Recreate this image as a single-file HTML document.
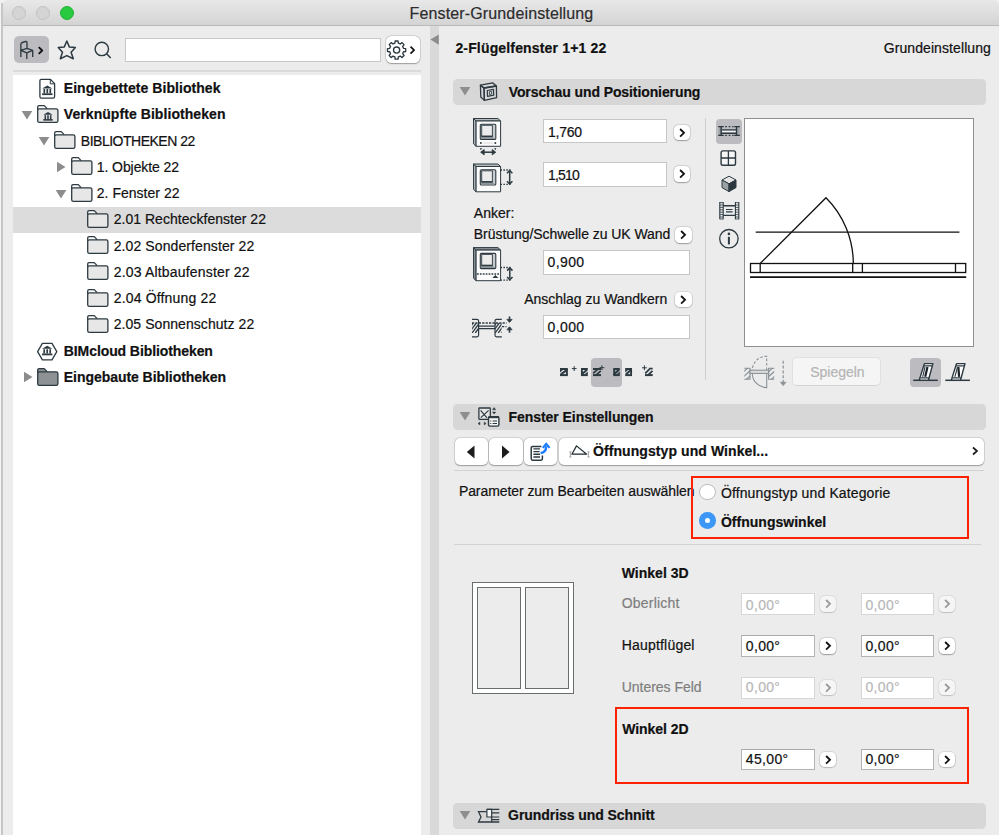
<!DOCTYPE html>
<html lang="de"><head><meta charset="utf-8"><title>Fenster-Grundeinstellung</title>
<style>

*{box-sizing:border-box;margin:0;padding:0}
html,body{width:999px;height:835px;overflow:hidden;background:#ececec}
body{position:relative;font-family:"Liberation Sans",sans-serif;font-size:14px;color:#111}
.a{position:absolute}
.t{position:absolute;white-space:nowrap;line-height:20px;height:20px;-webkit-text-stroke:0.2px currentColor}
#title{left:2.5px;top:0;width:996.5px;height:25.5px;background:linear-gradient(#e9e8e9,#d5d4d5);border-bottom:1px solid #b9b9b9;border-top-left-radius:5px;border-top-right-radius:5px}
.tl{position:absolute;top:6px;width:14px;height:14px;border-radius:50%;background:#d4d4d4;border:1px solid #c2c2c2}
#tree{left:13px;top:75px;width:408px;height:760px;background:#fff}
.sel{left:13px;top:206.5px;width:408px;height:26px;background:#dcdcdc}
.inp{position:absolute;background:#fff;border:1px solid #c6c6c6}
.inp.dis{border-color:#d6d6d6}
.inp.en{border-color:#b4b4b4;border-top-color:#aaa}
.ab{position:absolute;width:16.2px;height:15.6px;background:#fff;border-radius:4.5px;box-shadow:0 0 0 0.6px rgba(0,0,0,.13),0 0.6px 1.2px rgba(0,0,0,.3)}
.ab.dis{background:#f5f5f5;box-shadow:0 0 0 0.6px rgba(0,0,0,.09),0 0.5px 1px rgba(0,0,0,.15)}
.hdr{position:absolute;left:453px;width:533px;height:25.8px;background:#d7d7d7;border-radius:4.5px}
.btn{position:absolute;background:#fff;border-radius:5px;box-shadow:0 0 0 0.6px rgba(0,0,0,.13),0 0.6px 1.3px rgba(0,0,0,.3)}
.hl{position:absolute;height:1px;background:#d2d2d2}
.red{position:absolute;border:2.5px solid #ff2200;z-index:5}

</style></head><body>
<div class="a" style="left:0;top:0;width:999px;height:8px;background:#f1f1f1"></div><div class="a" id="title"></div>
<div class="a" style="left:0;top:3px;width:2.5px;height:832px;background:linear-gradient(90deg,#f4f4f4 0,#f4f4f4 36%,#c6c6c6 40%,#c6c6c6 100%)"></div>
<div class="tl" style="left:12px"></div><div class="tl" style="left:36px"></div><div class="tl" style="left:60px;background:#29c940;border-color:#20b237"></div>
<div class="a" style="left:14px;top:36px;width:35px;height:27px;border-radius:5px;background:#bcbcc0"></div>
<div class="inp" style="left:125px;top:37.5px;width:255.6px;height:24.8px;border-color:#c8c8c8"></div>
<div class="btn" style="left:385.5px;top:36.2px;width:34.9px;height:26.9px;border-radius:5.5px"></div>
<div class="hl" style="left:13px;top:69.8px;width:408px;background:#dadada;height:2px"></div>
<div class="a" id="tree"></div><div class="a sel"></div>
<div class="a" style="left:430.3px;top:26px;width:8.5px;height:809px;background:#d9d9d9"></div>
<svg class="a" style="left:430px;top:33px" width="9" height="13" viewBox="430 33 9 13"><path d="M438.8 34.4 V44.8 L430.4 39.6 Z" fill="#8c8c8c"/></svg>
<svg class="a" style="left:21.3px;top:109.8px" width="12" height="10" viewBox="0 0 12 10"><path d="M0.7 1 H11.3 L6 9.5 Z" fill="#8c8c8c"/></svg>
<svg class="a" style="left:38.0px;top:136.0px" width="12" height="10" viewBox="0 0 12 10"><path d="M0.7 1 H11.3 L6 9.5 Z" fill="#8c8c8c"/></svg>
<svg class="a" style="left:56.0px;top:161.2px" width="10" height="12" viewBox="0 0 10 12"><path d="M1 0.7 V11.3 L9.5 6 Z" fill="#8c8c8c"/></svg>
<svg class="a" style="left:55.0px;top:188.5px" width="12" height="10" viewBox="0 0 12 10"><path d="M0.7 1 H11.3 L6 9.5 Z" fill="#8c8c8c"/></svg>
<svg class="a" style="left:22.5px;top:371.2px" width="10" height="12" viewBox="0 0 10 12"><path d="M1 0.7 V11.3 L9.5 6 Z" fill="#8c8c8c"/></svg>
<div class="hdr" style="top:79px"></div>
<svg class="a" style="left:458.9px;top:86.4px" width="12" height="10" viewBox="0 0 12 10"><path d="M0.7 1 H11.3 L6 9.5 Z" fill="#8e8e8e"/></svg>
<div class="hdr" style="top:404px"></div>
<svg class="a" style="left:458.9px;top:411.4px" width="12" height="10" viewBox="0 0 12 10"><path d="M0.7 1 H11.3 L6 9.5 Z" fill="#8e8e8e"/></svg>
<div class="hdr" style="top:803px"></div>
<svg class="a" style="left:458.9px;top:810.4px" width="12" height="10" viewBox="0 0 12 10"><path d="M0.7 1 H11.3 L6 9.5 Z" fill="#8e8e8e"/></svg>
<div class="inp " style="left:543.0px;top:118.7px;width:123.6px;height:24.8px"></div>
<div class="ab" style="left:674.3px;top:124.5px"><svg class="a" style="left:0;top:0" width="16" height="16" viewBox="0 0 16 16"><path d="M6.1 4 L10 7.8 L6.1 11.6" fill="none" stroke="#111" stroke-width="1.8"/></svg></div>
<div class="inp " style="left:543.0px;top:161.7px;width:123.6px;height:25.0px"></div>
<div class="ab" style="left:674.3px;top:166.3px"><svg class="a" style="left:0;top:0" width="16" height="16" viewBox="0 0 16 16"><path d="M6.1 4 L10 7.8 L6.1 11.6" fill="none" stroke="#111" stroke-width="1.8"/></svg></div>
<div class="ab" style="left:675.4px;top:227.3px"><svg class="a" style="left:0;top:0" width="16" height="16" viewBox="0 0 16 16"><path d="M6.1 4 L10 7.8 L6.1 11.6" fill="none" stroke="#111" stroke-width="1.8"/></svg></div>
<div class="inp " style="left:543.0px;top:250.3px;width:147.0px;height:24.7px"></div>
<div class="ab" style="left:675.4px;top:291.5px"><svg class="a" style="left:0;top:0" width="16" height="16" viewBox="0 0 16 16"><path d="M6.1 4 L10 7.8 L6.1 11.6" fill="none" stroke="#111" stroke-width="1.8"/></svg></div>
<div class="inp " style="left:543.0px;top:314.6px;width:147.0px;height:24.9px"></div>
<div class="a" style="left:705px;top:118px;width:1px;height:262px;background:#d0d0d0"></div>
<div class="a" style="left:591px;top:358px;width:31px;height:29px;border-radius:4px;background:#bcbcc0"></div>
<div class="a" style="left:716px;top:118.5px;width:26px;height:25.5px;border-radius:4px;background:#bcbcc0"></div>
<div class="a" style="left:744.2px;top:117.5px;width:229.8px;height:229.8px;background:#fff;border:1.5px solid #8f8f8f"></div>
<svg class="a" style="left:745px;top:118px" width="229" height="229" viewBox="745 118 229 229" fill="none" stroke="#111" stroke-width="1.3">
<path d="M755.7 232.2 H959.4"/><path d="M760.2 263.5 L826 197.7 A93.1 93.1 0 0 1 853.3 263.5"/>
<rect x="750.5" y="263.5" width="215.2" height="9"/><path d="M760.2 263.5 v9 M852.7 263.5 v9 M862.4 263.5 v9 M955.5 263.5 v9"/>
<path d="M750 277.2 H966.2" stroke-width="1.8"/></svg>
<div class="a" style="left:792.3px;top:357.3px;width:89.2px;height:29px;border-radius:5px;background:#f5f5f5;border:1px solid #e0e0e0;border-bottom-color:#d4d4d4"></div>
<div class="a" style="left:909.5px;top:358px;width:31.5px;height:28.5px;border-radius:4px;background:#bcbcc0"></div>
<div class="btn" style="left:454.5px;top:437.5px;width:33.0px;height:27px"></div>
<div class="btn" style="left:489px;top:437.5px;width:33.5px;height:27px"></div>
<div class="btn" style="left:524px;top:437.5px;width:33px;height:27px"></div>
<div class="btn" style="left:558.5px;top:437.5px;width:425.5px;height:27px"></div>
<svg class="a" style="left:463px;top:444px" width="16" height="16" viewBox="463 444 16 16"><path d="M474.5 445.6 V458.5 L466.8 452 Z" fill="#1c1c1c"/></svg>
<svg class="a" style="left:498px;top:444px" width="16" height="16" viewBox="498 444 16 16"><path d="M502 445.6 V458.5 L509.5 452 Z" fill="#1c1c1c"/></svg>
<svg class="a" style="left:969px;top:445px" width="12" height="12" viewBox="0 0 12 12"><path d="M4 2.5 L8 6 L4 9.5" fill="none" stroke="#1c1c1c" stroke-width="1.7"/></svg>
<div class="hl" style="left:454px;top:469.7px;width:530px;height:1.5px"></div>
<div class="hl" style="left:454px;top:543.7px;width:527px;height:1.5px"></div>
<div class="red" style="left:690.7px;top:475.5px;width:278.1px;height:63.3px"></div>
<div class="a" style="left:699px;top:483.7px;width:16.5px;height:16.5px;border-radius:50%;background:#fff;border:1px solid #bdbdbd"></div>
<div class="a" style="left:699px;top:512.4px;width:16.5px;height:16.5px;border-radius:50%;background:#3d97f7"></div><div class="a" style="left:704.5px;top:517.9px;width:5.5px;height:5.5px;border-radius:50%;background:#fff"></div>
<div class="a" style="left:472px;top:582px;width:102px;height:112px;background:#fff;border:1px solid #6a6e6e"></div>
<div class="a" style="left:477px;top:587px;width:44px;height:102px;background:#ececec;border:1px solid #6a6e6e"></div>
<div class="a" style="left:525px;top:587px;width:44px;height:102px;background:#ececec;border:1px solid #6a6e6e"></div>
<div class="inp dis" style="left:741.3px;top:593.0px;width:73.4px;height:22.0px"></div>
<div class="ab dis" style="left:819.5px;top:596.2px"><svg class="a" style="left:0;top:0" width="16" height="16" viewBox="0 0 16 16"><path d="M6.1 4 L10 7.8 L6.1 11.6" fill="none" stroke="#9a9a9a" stroke-width="1.8"/></svg></div>
<div class="inp dis" style="left:861.0px;top:593.0px;width:73.3px;height:22.0px"></div>
<div class="ab dis" style="left:938.9px;top:596.2px"><svg class="a" style="left:0;top:0" width="16" height="16" viewBox="0 0 16 16"><path d="M6.1 4 L10 7.8 L6.1 11.6" fill="none" stroke="#9a9a9a" stroke-width="1.8"/></svg></div>
<div class="inp en" style="left:741.3px;top:634.8px;width:73.4px;height:22.0px"></div>
<div class="ab" style="left:819.5px;top:638.0px"><svg class="a" style="left:0;top:0" width="16" height="16" viewBox="0 0 16 16"><path d="M6.1 4 L10 7.8 L6.1 11.6" fill="none" stroke="#111" stroke-width="1.8"/></svg></div>
<div class="inp en" style="left:861.0px;top:634.8px;width:73.3px;height:22.0px"></div>
<div class="ab" style="left:938.9px;top:638.0px"><svg class="a" style="left:0;top:0" width="16" height="16" viewBox="0 0 16 16"><path d="M6.1 4 L10 7.8 L6.1 11.6" fill="none" stroke="#111" stroke-width="1.8"/></svg></div>
<div class="inp dis" style="left:741.3px;top:676.5px;width:73.4px;height:22.0px"></div>
<div class="ab dis" style="left:819.5px;top:679.7px"><svg class="a" style="left:0;top:0" width="16" height="16" viewBox="0 0 16 16"><path d="M6.1 4 L10 7.8 L6.1 11.6" fill="none" stroke="#9a9a9a" stroke-width="1.8"/></svg></div>
<div class="inp dis" style="left:861.0px;top:676.5px;width:73.3px;height:22.0px"></div>
<div class="ab dis" style="left:938.9px;top:679.7px"><svg class="a" style="left:0;top:0" width="16" height="16" viewBox="0 0 16 16"><path d="M6.1 4 L10 7.8 L6.1 11.6" fill="none" stroke="#9a9a9a" stroke-width="1.8"/></svg></div>
<div class="inp en" style="left:741.3px;top:749.0px;width:73.4px;height:20.5px"></div>
<div class="ab" style="left:819.5px;top:751.5px"><svg class="a" style="left:0;top:0" width="16" height="16" viewBox="0 0 16 16"><path d="M6.1 4 L10 7.8 L6.1 11.6" fill="none" stroke="#111" stroke-width="1.8"/></svg></div>
<div class="inp en" style="left:861.0px;top:749.0px;width:73.3px;height:20.5px"></div>
<div class="ab" style="left:938.9px;top:751.5px"><svg class="a" style="left:0;top:0" width="16" height="16" viewBox="0 0 16 16"><path d="M6.1 4 L10 7.8 L6.1 11.6" fill="none" stroke="#111" stroke-width="1.8"/></svg></div>
<div class="red" style="left:614.7px;top:707px;width:354px;height:77.2px"></div>
<svg class="a" style="left:14px;top:36px" width="35" height="27" viewBox="14 36 35 27" fill="none" stroke="#2d3a41" stroke-width="1.3" stroke-linejoin="round" stroke-linecap="butt" ><path d="M20.85 56.9 V44.6 Q20.85 43 22.4 42.5 L25.4 41.5 Q27 41.1 27 42.8 V48.3 M20.85 50.4 L27 48.3 L32.7 50.4 L26.8 52.9 Z M26.8 52.9 V59.1 M32.7 50.4 V56.9" stroke-width="1.35"/><path d="M38.7 47.1 L42.2 50.5 L38.7 53.9" stroke="#111" stroke-width="1.8"/></svg>
<svg class="a" style="left:56px;top:38px" width="22" height="23" viewBox="56 38 22 23" fill="none" stroke="#2d3a41" stroke-width="1.3" stroke-linejoin="round" stroke-linecap="butt" ><polygon points="66.8,40.95 69.3,46.9 75.35,47.6 71.1,52.3 73.3,58.7 66.8,55.6 60.3,58.7 62.5,52.3 58.25,47.6 64.3,46.9" stroke-width="1.5" stroke-linejoin="round"/></svg>
<svg class="a" style="left:92px;top:38px" width="22" height="23" viewBox="92 38 22 23" fill="none" stroke="#2d3a41" stroke-width="1.3" stroke-linejoin="round" stroke-linecap="butt" ><circle cx="101.8" cy="48.9" r="6.7" stroke-width="1.4"/><path d="M106.6 53.7 L110.7 57.9" stroke-width="1.5"/></svg>
<svg class="a" style="left:385px;top:37px" width="35" height="26" viewBox="385 37 35 26" fill="none" stroke="#2d3a41" stroke-width="1.3" stroke-linejoin="round" stroke-linecap="butt" ><path d="M395.16 40.96 L398.04 40.96 L398.31 43.16 L400.26 43.97 L402.01 42.61 L404.04 44.64 L402.68 46.39 L403.49 48.34 L405.69 48.61 L405.69 51.49 L403.49 51.76 L402.68 53.71 L404.04 55.46 L402.01 57.49 L400.26 56.13 L398.31 56.94 L398.04 59.14 L395.16 59.14 L394.89 56.94 L392.94 56.13 L391.19 57.49 L389.16 55.46 L390.52 53.71 L389.71 51.76 L387.51 51.49 L387.51 48.61 L389.71 48.34 L390.52 46.39 L389.16 44.64 L391.19 42.61 L392.94 43.97 L394.89 43.16 Z" stroke-width="1.35" stroke-linejoin="round"/><circle cx="396.6" cy="50.05" r="3.1" stroke-width="1.35"/><path d="M410.5 46.6 L414.1 50.1 L410.5 53.6" stroke="#111" stroke-width="1.7"/></svg>
<svg class="a" style="left:38px;top:77px" width="19" height="23" viewBox="38 77 19 23" fill="none" stroke="#2d3a41" stroke-width="1.3" stroke-linejoin="round" stroke-linecap="butt" ><path d="M41.2 79.4 H50.5 L54.6 83.6 V96.6 Q54.6 98.2 53 98.2 H41.2 Q39.9 98.2 39.9 96.6 V80.8 Q39.9 79.4 41.2 79.4 Z" fill="#fff"/><path d="M50.3 79.6 V83.8 H54.4" stroke-width="1"/><path d="M47.3 85.5 L52.5 88.6 H42.099999999999994 Z" fill="#2d3a41" stroke="none"/><path d="M44.3 89.0 v4.2 M47.3 89.0 v4.2 M50.3 89.0 v4.2" stroke-width="1.7"/><path d="M42.099999999999994 94.2 H52.5" stroke-width="1.8"/></svg>
<svg class="a" style="left:36px;top:104px" width="24" height="20" viewBox="36 104 24 20" fill="none" stroke="#2d3a41" stroke-width="1.3" stroke-linejoin="round" stroke-linecap="butt" ><path d="M37.7 110 V107 Q37.7 105.7 39 105.7 H43.6 Q44.6 105.7 45.3 106.6 L47.2 108.8" fill="#fff"/><rect x="37.7" y="108.8" width="20.2" height="13.6" rx="1.6" fill="#e7e7e7"/><path d="M48 112.0 L52.68 114.82 H43.32 Z" fill="#2d3a41" stroke="none"/><path d="M45.3 115.17999999999999 v3.7800000000000002 M48 115.17999999999999 v3.7800000000000002 M50.7 115.17999999999999 v3.7800000000000002" stroke-width="1.53"/><path d="M43.32 119.86 H52.68" stroke-width="1.62"/></svg>
<svg class="a" style="left:53px;top:130px" width="24" height="20" viewBox="53 130 24 20" fill="none" stroke="#2d3a41" stroke-width="1.3" stroke-linejoin="round" stroke-linecap="butt" ><path d="M54.7 136 V133 Q54.7 131.7 56 131.7 H60.6 Q61.6 131.7 62.3 132.6 L64.2 134.8" fill="#fff"/><rect x="54.7" y="134.8" width="20.2" height="13.6" rx="1.6" fill="#e7e7e7"/></svg>
<svg class="a" style="left:69.5px;top:156.3px" width="24" height="20" viewBox="69.5 156.3 24 20" fill="none" stroke="#2d3a41" stroke-width="1.3" stroke-linejoin="round" stroke-linecap="butt" ><path d="M71.2 162.3 V159.3 Q71.2 158.0 72.5 158.0 H77.1 Q78.1 158.0 78.8 158.9 L80.7 161.10000000000002" fill="#fff"/><rect x="71.2" y="161.10000000000002" width="20.2" height="13.6" rx="1.6" fill="#e7e7e7"/></svg>
<svg class="a" style="left:69.5px;top:182.5px" width="24" height="20" viewBox="69.5 182.5 24 20" fill="none" stroke="#2d3a41" stroke-width="1.3" stroke-linejoin="round" stroke-linecap="butt" ><path d="M71.2 188.5 V185.5 Q71.2 184.2 72.5 184.2 H77.1 Q78.1 184.2 78.8 185.1 L80.7 187.3" fill="#fff"/><rect x="71.2" y="187.3" width="20.2" height="13.6" rx="1.6" fill="#e7e7e7"/></svg>
<svg class="a" style="left:86px;top:208.8px" width="24" height="20" viewBox="86 208.8 24 20" fill="none" stroke="#2d3a41" stroke-width="1.3" stroke-linejoin="round" stroke-linecap="butt" ><path d="M87.7 214.8 V211.8 Q87.7 210.5 89 210.5 H93.6 Q94.6 210.5 95.3 211.4 L97.2 213.60000000000002" fill="#fff"/><rect x="87.7" y="213.60000000000002" width="20.2" height="13.6" rx="1.6" fill="#e7e7e7"/></svg>
<svg class="a" style="left:86px;top:235px" width="24" height="20" viewBox="86 235 24 20" fill="none" stroke="#2d3a41" stroke-width="1.3" stroke-linejoin="round" stroke-linecap="butt" ><path d="M87.7 241 V238 Q87.7 236.7 89 236.7 H93.6 Q94.6 236.7 95.3 237.6 L97.2 239.8" fill="#fff"/><rect x="87.7" y="239.8" width="20.2" height="13.6" rx="1.6" fill="#e7e7e7"/></svg>
<svg class="a" style="left:86px;top:261.3px" width="24" height="20" viewBox="86 261.3 24 20" fill="none" stroke="#2d3a41" stroke-width="1.3" stroke-linejoin="round" stroke-linecap="butt" ><path d="M87.7 267.3 V264.3 Q87.7 263.0 89 263.0 H93.6 Q94.6 263.0 95.3 263.90000000000003 L97.2 266.1" fill="#fff"/><rect x="87.7" y="266.1" width="20.2" height="13.6" rx="1.6" fill="#e7e7e7"/></svg>
<svg class="a" style="left:86px;top:287.5px" width="24" height="20" viewBox="86 287.5 24 20" fill="none" stroke="#2d3a41" stroke-width="1.3" stroke-linejoin="round" stroke-linecap="butt" ><path d="M87.7 293.5 V290.5 Q87.7 289.2 89 289.2 H93.6 Q94.6 289.2 95.3 290.1 L97.2 292.3" fill="#fff"/><rect x="87.7" y="292.3" width="20.2" height="13.6" rx="1.6" fill="#e7e7e7"/></svg>
<svg class="a" style="left:86px;top:313.8px" width="24" height="20" viewBox="86 313.8 24 20" fill="none" stroke="#2d3a41" stroke-width="1.3" stroke-linejoin="round" stroke-linecap="butt" ><path d="M87.7 319.8 V316.8 Q87.7 315.5 89 315.5 H93.6 Q94.6 315.5 95.3 316.40000000000003 L97.2 318.6" fill="#fff"/><rect x="87.7" y="318.6" width="20.2" height="13.6" rx="1.6" fill="#e7e7e7"/></svg>
<svg class="a" style="left:36px;top:341px" width="23" height="21" viewBox="36 341 23 21" fill="none" stroke="#2d3a41" stroke-width="1.3" stroke-linejoin="round" stroke-linecap="butt" ><path d="M37.6 351.6 L42.4 343.4 H52 L56.8 351.6 L52 359.9 H42.4 Z" fill="#fff"/><path d="M47.2 345.7 L52.400000000000006 348.8 H42.0 Z" fill="#2d3a41" stroke="none"/><path d="M44.2 349.2 v4.2 M47.2 349.2 v4.2 M50.2 349.2 v4.2" stroke-width="1.7"/><path d="M42.0 354.4 H52.400000000000006" stroke-width="1.8"/></svg>
<svg class="a" style="left:36px;top:367px" width="24" height="20" viewBox="36 367 24 20" fill="none" stroke="#2d3a41" stroke-width="1.3" stroke-linejoin="round" stroke-linecap="butt" ><path d="M37.7 373 V370 Q37.7 368.7 39 368.7 H43.6 Q44.6 368.7 45.3 369.6 L47.2 371.8" fill="#8e9295"/><rect x="37.7" y="371.8" width="20.2" height="13.6" rx="1.6" fill="#8e9295"/></svg>
<svg class="a" style="left:479px;top:81px" width="20" height="22" viewBox="479 81 20 22" fill="none" stroke="#2d3a41" stroke-width="1.3" stroke-linejoin="round" stroke-linecap="butt" stroke-width="1.2"><path d="M484 88 L496.4 86 L496.6 97.7 L484.4 100.4 Z"/><path d="M480.4 85.2 L484 88 L484.4 100.4 L480.8 97 Z"/><path d="M480.4 85.2 L492.8 82.9 L496.4 86 L484 88 Z"/><path d="M487.3 90.5 L493.5 89.3 L493.7 95.2 L487.5 96.4 Z" stroke-width="1.2"/><path d="M489.4 91.8 L491.6 91.4 L491.7 94 L489.5 94.5 Z" fill="#fff" stroke-width="0.9"/></svg>
<svg class="a" style="left:472px;top:117px" width="31" height="40" viewBox="472 117 31 40" fill="none" stroke="#2d3a41" stroke-width="1.3" stroke-linejoin="round" stroke-linecap="butt" ><g stroke-width="1"><path d="M473.5 118.5 L476.09999999999997 121.0 V146.3 L473.59999999999997 143.9 Z" fill="#b7bbbe"/><path d="M473.5 118.5 H497.9 L500.59999999999997 121.0 H476.09999999999997 Z" fill="#b7bbbe"/><rect x="476.09999999999997" y="121.0" width="24.5" height="25.3" fill="#fbfbfb"/></g><rect x="480.29999999999995" y="124.3" width="15.5" height="15.2" rx="1" fill="#c9cccf" stroke-width="1.1"/><path d="M480.9 136.4 H492.49999999999994 L495.09999999999997 139.0 H480.9 Z" fill="#8f969a" stroke="none"/><rect x="481.7" y="125.3" width="10.7" height="10.9" fill="#ececec" stroke-width="0.9"/><path d="M481.29999999999995 136.4 H492.7" stroke-width="1.3"/><circle cx="480.9" cy="143" r="1" fill="#2d3a41" stroke="none"/><circle cx="495.3" cy="143" r="1" fill="#2d3a41" stroke="none"/><path d="M483 143 H493.4" stroke="#d9d9d9" stroke-width="1"/><circle cx="480.9" cy="148.8" r="0.9" fill="#2d3a41" stroke="none"/><circle cx="495.3" cy="148.8" r="0.9" fill="#2d3a41" stroke="none"/><path d="M483 152.2 H493.4" stroke-width="1.5"/><path d="M484.2 149.5 L480.6 152.2 L484.2 154.9 Z M492.2 149.5 L495.8 152.2 L492.2 154.9 Z" fill="#2d3a41" stroke-width="0.8"/></svg>
<svg class="a" style="left:472px;top:162px" width="44" height="32" viewBox="472 162 44 32" fill="none" stroke="#2d3a41" stroke-width="1.3" stroke-linejoin="round" stroke-linecap="butt" ><g stroke-width="1"><path d="M473.5 164.0 L476.09999999999997 166.5 V191.8 L473.59999999999997 189.4 Z" fill="#b7bbbe"/><path d="M473.5 164.0 H497.9 L500.59999999999997 166.5 H476.09999999999997 Z" fill="#b7bbbe"/><rect x="476.09999999999997" y="166.5" width="24.5" height="25.3" fill="#fbfbfb"/></g><rect x="480.29999999999995" y="169.8" width="15.5" height="15.2" rx="1" fill="#c9cccf" stroke-width="1.1"/><path d="M480.9 181.9 H492.49999999999994 L495.09999999999997 184.5 H480.9 Z" fill="#8f969a" stroke="none"/><rect x="481.7" y="170.8" width="10.7" height="10.9" fill="#ececec" stroke-width="0.9"/><path d="M481.29999999999995 181.9 H492.7" stroke-width="1.3"/><path d="M500.5 170 H510.5 M500.5 184.4 H510.5" stroke-dasharray="1.5 1.4" stroke-width="1.3"/><path d="M509.7 171.4 V183" stroke-width="1.5"/><path d="M507 173.2 L509.7 170.4 L512.4 173.2 M507 181.2 L509.7 184 L512.4 181.2" stroke-width="1.5"/></svg>
<svg class="a" style="left:472px;top:246px" width="44" height="37" viewBox="472 246 44 37" fill="none" stroke="#2d3a41" stroke-width="1.3" stroke-linejoin="round" stroke-linecap="butt" ><g stroke-width="1"><path d="M473.5 247.60000000000002 L476.09999999999997 250.10000000000002 V280.70000000000005 L473.59999999999997 278.30000000000007 Z" fill="#8d9498"/><path d="M473.5 247.60000000000002 H497.9 L500.59999999999997 250.10000000000002 H476.09999999999997 Z" fill="#8d9498"/><rect x="476.09999999999997" y="250.10000000000002" width="24.5" height="30.6" fill="#fbfbfb"/></g><rect x="480.29999999999995" y="253.40000000000003" width="15.5" height="15.2" rx="1" fill="#c9cccf" stroke-width="1.1"/><path d="M480.9 265.5 H492.49999999999994 L495.09999999999997 268.1 H480.9 Z" fill="#8f969a" stroke="none"/><rect x="481.7" y="254.40000000000003" width="10.7" height="10.9" fill="#ececec" stroke-width="0.9"/><path d="M481.29999999999995 265.5 H492.7" stroke-width="1.3"/><path d="M477 274.1 H500" stroke-dasharray="1.7 1.2" stroke-width="1.5"/><path d="M492.4 278 L495.4 275 L498.4 278 Z" fill="#2d3a41" stroke="none"/><path d="M500.5 267.5 H510.5 M500.5 280.1 H510.5" stroke-dasharray="1.5 1.4" stroke-width="1.3"/><path d="M509.8 269 V278.6" stroke-width="1.5"/><path d="M507.1 270.6 L509.8 267.9 L512.5 270.6 M507.1 277 L509.8 279.7 L512.5 277" stroke-width="1.5"/></svg>
<svg class="a" style="left:471px;top:314px" width="44" height="26" viewBox="471 314 44 26" fill="none" stroke="#2d3a41" stroke-width="1.2"><defs><clipPath id="cw1"><rect x="472" y="323" width="6.6" height="10"/></clipPath><clipPath id="cw2"><rect x="495" y="323" width="6.6" height="10"/></clipPath></defs><g clip-path="url(#cw1)"><path d="M465.6 333 L473.1 323" stroke-width="1.3"/><path d="M468.8 333 L476.3 323" stroke-width="1.3"/><path d="M472.0 333 L479.5 323" stroke-width="1.3"/><path d="M475.2 333 L482.7 323" stroke-width="1.3"/><path d="M478.4 333 L485.9 323" stroke-width="1.3"/><path d="M481.6 333 L489.1 323" stroke-width="1.3"/></g><g clip-path="url(#cw2)"><path d="M488.6 333 L496.1 323" stroke-width="1.3"/><path d="M491.8 333 L499.3 323" stroke-width="1.3"/><path d="M495.0 333 L502.5 323" stroke-width="1.3"/><path d="M498.2 333 L505.7 323" stroke-width="1.3"/><path d="M501.4 333 L508.9 323" stroke-width="1.3"/><path d="M504.6 333 L512.1 323" stroke-width="1.3"/></g><path d="M472 319.4 H477 Q478.6 319.4 478.6 321 V335 Q478.6 336.8 477 336.8 H472"/><path d="M501.8 319.4 H496.6 Q495 319.4 495 321 V335 Q495 336.8 496.6 336.8 H501.8"/><path d="M478.6 326.1 H495 M478.6 328.7 H495" stroke-width="1.2"/><path d="M472 323 H506.5 M502 326.6 H506.5" stroke-dasharray="2.2 1.2" stroke-width="1.3"/><path d="M509.5 316.4 V321.6 M509.5 327.6 V332.8" stroke-width="1.6"/><path d="M506.9 319.4 L509.5 322.4 L512.1 319.4 Z M506.9 329.8 L509.5 326.8 L512.1 329.8 Z" fill="#2d3a41" stroke-width="0.8"/></svg>
<svg class="a" style="left:556px;top:362px" width="102" height="20" viewBox="556 362 102 20" fill="none" stroke="#2d3a41" stroke-width="1.3" stroke-linejoin="round" stroke-linecap="butt" ><path d="M560 369 H567.8" stroke-width="2"/><path d="M560 375.1 H567.8" stroke-width="2"/><path d="M566.9 369 V375.1" stroke-width="1.9"/><path d="M560.8 374.3 L567.0 369.8" stroke-width="2.1"/><path d="M560 369.5 H563.4 L560 372.6 Z" fill="#2d3a41" stroke="none"/><path d="M571.8000000000001 368.6 H576.6 M574.2 366.20000000000005 V371.0" stroke-width="1"/><path d="M581 369 H587.8" stroke-width="2"/><path d="M581 375.1 H587.8" stroke-width="2"/><path d="M581.9 369 V375.1" stroke-width="1.9"/><path d="M581.8 374.3 L587.0 369.8" stroke-width="2.1"/><path d="M587.8 374.6 H584.4 L587.8 371.5 Z" fill="#2d3a41" stroke="none"/><path d="M593 369 H601" stroke-width="2"/><path d="M593 375.1 H601" stroke-width="2"/><path d="M593.2 373.3 L597.8 369.2 M596.2 374.90000000000003 L600.8 370.8" stroke-width="1.8"/><path d="M599.5 367.7 H604.3 M601.9 365.3 V370.09999999999997" stroke-width="1"/><path d="M613.3 369 H619.8" stroke-width="2"/><path d="M613.3 375.1 H619.8" stroke-width="2"/><path d="M614.1999999999999 369 V375.1" stroke-width="1.9"/><path d="M614.0999999999999 374.3 L619.0 369.8" stroke-width="2.1"/><path d="M619.8 374.6 H616.4 L619.8 371.5 Z" fill="#2d3a41" stroke="none"/><path d="M625.2 369 H632" stroke-width="2"/><path d="M625.2 375.1 H632" stroke-width="2"/><path d="M631.1 369 V375.1" stroke-width="1.9"/><path d="M626.0 374.3 L631.2 369.8" stroke-width="2.1"/><path d="M625.2 369.5 H628.6 L625.2 372.6 Z" fill="#2d3a41" stroke="none"/><path d="M645 375.1 H652.7" stroke-width="2"/><path d="M645.2 373.3 L649.5 369.2 M648.2 374.90000000000003 L652.5 370.8" stroke-width="1.8"/><path d="M649 368.6 H652.7" stroke-width="1.7"/><path d="M642.0 367.8 H646.8 M644.4 365.40000000000003 V370.2" stroke-width="1"/></svg>
<svg class="a" style="left:716px;top:118px" width="26" height="26" viewBox="716 118 26 26" fill="none" stroke="#2d3a41" stroke-width="1.3" stroke-linejoin="round" stroke-linecap="butt" ><path d="M721.7 131.5 H736" stroke="#f4f4f4" stroke-width="2"/><path d="M721.1 126.7 V135.3 M736.6 126.7 V135.3" stroke-width="1.5"/><path d="M719.2 127 V135 M738.9 127 V135" stroke="#8d9498" stroke-width="0.9"/><path d="M718.2 126.7 H723.8 M718.2 135.3 H723.8 M734.2 126.7 H739.9 M734.2 135.3 H739.9" stroke-width="1.3"/><path d="M721.1 129.9 H736.6 M721.1 133.2 H736.6" stroke-width="1.4"/><path d="M725.2 126.7 H733.6 M725.2 135.3 H733.6" stroke-dasharray="1.7 1.8" stroke-width="1.2"/></svg>
<svg class="a" style="left:719px;top:149px" width="19" height="19" viewBox="719 149 19 19" fill="none" stroke="#2d3a41" stroke-width="1.3" stroke-linejoin="round" stroke-linecap="butt" ><rect x="721.1" y="150.9" width="14.4" height="14.4" rx="1.8" fill="#f6f6f6" stroke-width="1.4"/><path d="M728.4 150.9 V165.3 M721.1 158 H735.5" stroke-width="1.3"/></svg>
<svg class="a" style="left:720px;top:174px" width="18" height="20" viewBox="720 174 18 20" fill="none" stroke="#2d3a41" stroke-width="1.3" stroke-linejoin="round" stroke-linecap="butt" ><path d="M729 176.2 L736 180 L729 183.8 L722 180 Z" fill="#e6e6e6" stroke-width="1"/><path d="M722 180 L729 183.8 V191.6 L722 187.6 Z" fill="#9aa0a4" stroke-width="1"/><path d="M736 180 L729 183.8 V191.6 L736 187.6 Z" fill="#2b363c" stroke-width="1"/></svg>
<svg class="a" style="left:718px;top:200px" width="23" height="21" viewBox="718 200 23 21" fill="none" stroke="#2d3a41" stroke-width="1.3" stroke-linejoin="round" stroke-linecap="butt" ><path d="M719.8 202 V219.2 M723.2 202 V219.2 M735.4 202 V219.2 M738.8 202 V219.2" stroke-width="1.1"/><path d="M719.8 202.6 H723.2 M719.8 205 H723.2 M719.8 207.4 H723.2 M719.8 209.8 H723.2 M719.8 212.2 H723.2 M719.8 214.6 H723.2 M719.8 217 H723.2 M719.8 219 H723.2 M735.4 202.6 H738.8 M735.4 205 H738.8 M735.4 207.4 H738.8 M735.4 209.8 H738.8 M735.4 212.2 H738.8 M735.4 214.6 H738.8 M735.4 217 H738.8 M735.4 219 H738.8" stroke-width="0.8"/><path d="M723.2 205.7 H735.4 M723.2 215.4 H735.4" stroke-width="1.4"/><path d="M726 209.5 H732.6 M726 211.9 H732.6" stroke-width="1.2"/></svg>
<svg class="a" style="left:718px;top:228px" width="22" height="22" viewBox="718 228 22 22" fill="none" stroke="#2d3a41" stroke-width="1.3" stroke-linejoin="round" stroke-linecap="butt" ><circle cx="728.9" cy="238.7" r="9.2" stroke-width="1.3"/><path d="M728.9 236.8 V244.4" stroke-width="2"/><circle cx="728.9" cy="233.9" r="1.3" fill="#2d3a41" stroke="none"/></svg>
<svg class="a" style="left:743px;top:354px" width="46" height="36" viewBox="743 354 46 36" fill="none" stroke="#8b9297" stroke-width="1.1"><defs><clipPath id="cm1"><rect x="744.3" y="368" width="5.7" height="11.4"/></clipPath><clipPath id="cm2"><rect x="768.6" y="368" width="5.6" height="11.4"/></clipPath></defs><g clip-path="url(#cm1)"><path d="M741 374 L750 366 M741 379 L752 369 M744 381.5 L753 373.5" stroke-width="1.2"/></g><g clip-path="url(#cm2)"><path d="M766 374 L775 366 M766 379 L777 369 M769 381.5 L778 373.5" stroke-width="1.2"/></g><path d="M744.3 368.3 H750 V379.2 H744.3 M774.2 368.3 H768.6 V379.2 H774.2"/><rect x="750" y="370.2" width="18.6" height="3.2" fill="#ddd"/><path d="M766.7 373.4 V387.6 A14.3 14.3 0 0 1 752.3 373.4" /><path d="M766.7 370 V356.4 H764 A14.3 14.3 0 0 0 752.3 370" stroke-dasharray="2.6 1.8"/><path d="M783.2 360.8 V383" stroke-dasharray="3 1.8" stroke-width="1.2"/><path d="M780.4 382.2 H786 L783.2 385.6 Z" fill="#8b9297" stroke-width="0.8"/></svg>
<svg class="a" style="left:909px;top:358px" width="33" height="29" viewBox="909 358 33 29" fill="none" stroke="#2d3a41" stroke-width="1.3" stroke-linejoin="round" stroke-linecap="butt" ><path d="M913.2 380.3 H937.8000000000001" stroke-width="1.5"/><path d="M919.2 380.3 L924.4000000000001 363.6 H932.9000000000001 L928.4000000000001 380.3 Z" fill="#fff" stroke-width="1.4"/><path d="M923.8000000000001 365.9 H932.2 M920.4000000000001 377.8 H929.0" stroke-width="1.2"/><path d="M927.5 367 L925.2 376.8" stroke="#1a2328" stroke-width="2.2"/><path d="M925.0 367 L922.7 376.8" stroke-width="1.1"/></svg>
<svg class="a" style="left:944px;top:358px" width="30" height="29" viewBox="944 358 30 29" fill="none" stroke="#2d3a41" stroke-width="1.3" stroke-linejoin="round" stroke-linecap="butt" ><path d="M945.3 380.3 H969.9" stroke-width="1.5"/><path d="M951.3 380.3 L956.5 363.6 H965.0 L960.5 380.3 Z" fill="#fff" stroke-width="1.4"/><path d="M955.9 365.9 H964.3 M952.5 377.8 H961.0999999999999" stroke-width="1.2"/><path d="M958.4 367 L959.0999999999999 376.8" stroke="#1a2328" stroke-width="2.2"/><path d="M957.5 367 L954.9 376.8" stroke-width="1.1"/></svg>
<svg class="a" style="left:476px;top:405px" width="26" height="23" viewBox="476 405 26 23" fill="none" stroke="#2d3a41" stroke-width="1.3" stroke-linejoin="round" stroke-linecap="butt" ><rect x="478.9" y="408" width="11.4" height="11.4" rx="0.6" fill="#e6e6e6" stroke-width="1.3"/><path d="M480.6 410.4 L487 417.8 M488.6 410.4 L480.8 417.6" stroke-width="1.2"/><path d="M494.1 407.6 L492.5 409.7 H495.7 Z M494.1 414 L492.5 412 H495.7 Z" fill="#2d3a41" stroke-width="0.5"/><path d="M478 423.5 L479.9 422.1 V424.9 Z M486.1 423.5 L484.2 422.1 V424.9 Z" fill="#2d3a41" stroke-width="0.5"/><rect x="488.5" y="416.7" width="10.4" height="9.4" rx="1.4" fill="#f2f2f2" stroke-width="1.4"/><path d="M488.5 417.2 H498.9" stroke-width="2"/><path d="M490.2 421 H491.2 M492.6 421 H497 M490.2 423.5 H491.2 M492.6 423.5 H497" stroke-width="1.2"/></svg>
<svg class="a" style="left:528px;top:440px" width="24" height="23" viewBox="528 440 24 23" fill="none" stroke="#2d3a41" stroke-width="1.3" stroke-linejoin="round" stroke-linecap="butt" ><path d="M541.4 446.5 H532.6 Q531.2 446.5 531.2 447.9 V458.8 Q531.2 460.2 532.6 460.2 H541 Q542.4 460.2 542.4 458.8 V455.4" stroke-width="1.5"/><path d="M533.4 448.9 H540 M533.4 451.6 H539.6 M533.4 454.3 H540 M533.4 457 H540" stroke-width="1.4"/><path d="M540.6 453 Q546 452.6 546.2 446.2" stroke="#1a7bff" stroke-width="2.4"/><path d="M542.8 447.9 L546.2 443.9 L549.6 447.9" stroke="#1a7bff" stroke-width="2.2" stroke-linejoin="miter"/></svg>
<svg class="a" style="left:567px;top:443px" width="26" height="17" viewBox="567 443 26 17" fill="none" stroke="#2d3a41" stroke-width="1.3" stroke-linejoin="round" stroke-linecap="butt" ><path d="M569.2 451.9 H571.4 M569.2 457 H571.4 M570.4 451.9 V457 M587.4 451.9 H589.6 M587.4 457 H589.6 M588.4 451.9 V457" stroke="#9a9a9a" stroke-width="0.9"/><path d="M571.9 454.2 L576.5 445.9 L586.7 454.2 Z" stroke="#1f2a30" stroke-width="1.2"/></svg>
<svg class="a" style="left:476px;top:807px" width="25" height="17" viewBox="476 807 25 17" fill="none" stroke="#2d3a41" stroke-width="1.3" stroke-linejoin="round" stroke-linecap="butt" ><path d="M486.4 811.7 H478.5 L481 817 L478.5 822 H499.3" stroke-width="1.3" stroke-linejoin="miter"/><rect x="486.9" y="809.4" width="4.8" height="7.6" fill="#f4f4f4" stroke-width="1.2"/><path d="M486.9 809.4 H499.3 M491.7 812.9 H499.3 M491.7 817 H499.3 M491.7 819.6 H499.3 M491.7 817 V822" stroke-width="1.2"/></svg>
<div class="t" id="t0" style="left:409.6px;top:4.46px;font-size:16px;color:#2c2c2c;letter-spacing:0.136px;">Fenster-Grundeinstellung</div>
<div class="t" id="t1" style="left:63.8px;top:78.15px;font-size:14px;color:#111;font-weight:bold;letter-spacing:0.049px;">Eingebettete Bibliothek</div>
<div class="t" id="t2" style="left:63.8px;top:104.40px;font-size:14px;color:#111;font-weight:bold;letter-spacing:0.063px;">Verknüpfte Bibliotheken</div>
<div class="t" id="t3" style="left:80.8px;top:130.65px;font-size:14px;color:#111;letter-spacing:-0.493px;">BIBLIOTHEKEN 22</div>
<div class="t" id="t4" style="left:96.8px;top:156.90px;font-size:14px;color:#111;letter-spacing:-0.083px;">1. Objekte 22</div>
<div class="t" id="t5" style="left:96.8px;top:183.15px;font-size:14px;color:#111;letter-spacing:0.015px;">2. Fenster 22</div>
<div class="t" id="t6" style="left:113.7px;top:209.40px;font-size:14px;color:#111;letter-spacing:0.023px;">2.01 Rechteckfenster 22</div>
<div class="t" id="t7" style="left:113.7px;top:235.65px;font-size:14px;color:#111;letter-spacing:0.098px;">2.02 Sonderfenster 22</div>
<div class="t" id="t8" style="left:113.7px;top:261.90px;font-size:14px;color:#111;letter-spacing:0.180px;">2.03 Altbaufenster 22</div>
<div class="t" id="t9" style="left:113.7px;top:288.15px;font-size:14px;color:#111;letter-spacing:0.169px;">2.04 Öffnung 22</div>
<div class="t" id="t10" style="left:113.7px;top:314.40px;font-size:14px;color:#111;letter-spacing:0.063px;">2.05 Sonnenschutz 22</div>
<div class="t" id="t11" style="left:63.8px;top:340.65px;font-size:14px;color:#111;font-weight:bold;letter-spacing:-0.090px;">BIMcloud Bibliotheken</div>
<div class="t" id="t12" style="left:63.8px;top:366.90px;font-size:14px;color:#111;font-weight:bold;letter-spacing:-0.050px;">Eingebaute Bibliotheken</div>
<div class="t" id="t13" style="left:455.4px;top:37.95px;font-size:14px;color:#111;font-weight:bold;letter-spacing:0.161px;">2-Flügelfenster 1+1 22</div>
<div class="t" id="t14" style="left:883.7px;top:38.15px;font-size:14px;color:#111;letter-spacing:0.090px;">Grundeinstellung</div>
<div class="t" id="t15" style="left:508.7px;top:82.45px;font-size:14px;color:#111;font-weight:bold;letter-spacing:-0.096px;">Vorschau und Positionierung</div>
<div class="t" id="t16" style="left:548.0px;top:121.65px;font-size:14px;color:#111;letter-spacing:-0.269px;">1,760</div>
<div class="t" id="t17" style="left:548.0px;top:164.55px;font-size:14px;color:#111;letter-spacing:-0.809px;">1,510</div>
<div class="t" id="t18" style="left:473.8px;top:202.85px;font-size:14px;color:#111;letter-spacing:0.005px;">Anker:</div>
<div class="t" id="t19" style="left:473.8px;top:224.15px;font-size:14px;color:#111;letter-spacing:-0.051px;">Brüstung/Schwelle zu UK Wand</div>
<div class="t" id="t20" style="left:547.5px;top:252.35px;font-size:14px;color:#111;letter-spacing:0.391px;">0,900</div>
<div class="t" id="t21" style="left:524.2px;top:288.85px;font-size:14px;color:#111;letter-spacing:-0.018px;">Anschlag zu Wandkern</div>
<div class="t" id="t22" style="left:547.5px;top:317.15px;font-size:14px;color:#111;letter-spacing:0.391px;">0,000</div>
<div class="t" id="t23" style="left:810.3px;top:361.85px;font-size:14px;color:#b4b4b4;letter-spacing:-0.037px;">Spiegeln</div>
<div class="t" id="t24" style="left:508.5px;top:407.15px;font-size:14px;color:#111;font-weight:bold;letter-spacing:-0.055px;">Fenster Einstellungen</div>
<div class="t" id="t25" style="left:593.0px;top:441.15px;font-size:14px;color:#111;font-weight:bold;letter-spacing:0.079px;">Öffnungstyp und Winkel...</div>
<div class="t" id="t26" style="left:458.9px;top:480.75px;font-size:14px;color:#111;letter-spacing:-0.075px;">Parameter zum Bearbeiten auswählen</div>
<div class="t" id="t27" style="left:720.9px;top:483.15px;font-size:14px;color:#111;letter-spacing:0.132px;">Öffnungstyp und Kategorie</div>
<div class="t" id="t28" style="left:720.9px;top:511.65px;font-size:14px;color:#111;font-weight:bold;letter-spacing:0.021px;">Öffnungswinkel</div>
<div class="t" id="t29" style="left:621.7px;top:563.15px;font-size:14px;color:#111;font-weight:bold;letter-spacing:0.024px;">Winkel 3D</div>
<div class="t" id="t30" style="left:621.7px;top:593.15px;font-size:14px;color:#7e7e7e;letter-spacing:0.219px;">Oberlicht</div>
<div class="t" id="t31" style="left:621.7px;top:635.15px;font-size:14px;color:#111;letter-spacing:0.197px;">Hauptflügel</div>
<div class="t" id="t32" style="left:621.7px;top:677.15px;font-size:14px;color:#7e7e7e;letter-spacing:-0.021px;">Unteres Feld</div>
<div class="t" id="t33" style="left:745.8px;top:594.55px;font-size:14px;color:#b8b8b8;letter-spacing:0.328px;">0,00°</div>
<div class="t" id="t34" style="left:745.8px;top:635.85px;font-size:14px;color:#111;letter-spacing:0.328px;">0,00°</div>
<div class="t" id="t35" style="left:745.8px;top:677.35px;font-size:14px;color:#b8b8b8;letter-spacing:0.328px;">0,00°</div>
<div class="t" id="t36" style="left:865.5px;top:594.55px;font-size:14px;color:#b8b8b8;letter-spacing:0.328px;">0,00°</div>
<div class="t" id="t37" style="left:865.5px;top:635.85px;font-size:14px;color:#111;letter-spacing:0.328px;">0,00°</div>
<div class="t" id="t38" style="left:865.5px;top:677.35px;font-size:14px;color:#b8b8b8;letter-spacing:0.328px;">0,00°</div>
<div class="t" id="t39" style="left:745.8px;top:749.15px;font-size:14px;color:#111;letter-spacing:0.343px;">45,00°</div>
<div class="t" id="t40" style="left:865.5px;top:749.15px;font-size:14px;color:#111;letter-spacing:0.328px;">0,00°</div>
<div class="t" id="t41" style="left:622.2px;top:718.55px;font-size:14px;color:#111;font-weight:bold;letter-spacing:-0.053px;">Winkel 2D</div>
<div class="t" id="t42" style="left:508.1px;top:805.45px;font-size:14px;color:#111;font-weight:bold;letter-spacing:-0.061px;">Grundriss und Schnitt</div>
</body></html>
